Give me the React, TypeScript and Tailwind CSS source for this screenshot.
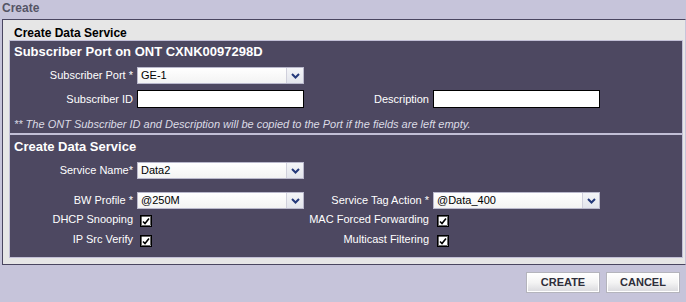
import { ReactNode } from 'react';

const Chevron = () => (
  <svg width="9" height="6" viewBox="0 0 9 6">
    <path d="M1 1 L4.5 4.5 L8 1" fill="none" stroke="#24397a" strokeWidth="2" />
  </svg>
);

const SelectBox = ({ value }: { value: string }) => (
  <div className="flex h-[17px] w-[167px] border border-[#b9b8cc] bg-gradient-to-b from-white to-[#f3f3f3]">
    <span className="flex-1 pl-[3px] text-[11px] leading-[15px] text-black">{value}</span>
    <span className="flex w-[17px] items-center justify-center border-l border-[#d0d0dc] bg-gradient-to-b from-[#f4f5f8] to-[#e3e5ec]">
      <Chevron />
    </span>
  </div>
);

const TextBox = () => <div className="h-[18px] w-[167px] border border-black bg-white" />;

const Check = () => (
  <svg width="12" height="12" viewBox="0 0 12 12">
    <rect x="0.5" y="0.5" width="11" height="11" fill="#fff" stroke="#000" />
    <rect x="1.5" y="1.5" width="9" height="9" fill="none" stroke="#000" strokeWidth="0.6" />
    <path d="M3 6.5 L5 8.5 L9 3.5" fill="none" stroke="#000" strokeWidth="1.6" />
  </svg>
);

const Label = ({ children }: { children: ReactNode }) => (
  <span className="pr-1 text-right text-[11px] text-white">{children}</span>
);

const Button = ({ children }: { children: ReactNode }) => (
  <button className="h-[21px] w-[74px] border border-[#b4b4bc] bg-gradient-to-b from-white via-[#f4f4f4] to-[#d9d9dd] text-[11px] font-bold text-[#2e2e3a] shadow-[inset_0_0_0_1px_#fff]">
    {children}
  </button>
);

export default function App() {
  return (
    <div
      className="flex h-[302px] w-[686px] flex-col bg-[#c6c4da]"
      style={{ fontFamily: '"Liberation Sans", Arial, sans-serif' }}
    >
      <div className="h-[19px] pl-[2px] text-[12px] font-bold leading-[17px] text-[#555566]">Create</div>

      {/* Outer panel */}
      <div className="ml-[2px] w-[684px] border border-r-[#c6c4da] border-[#4a4660] bg-[#e6e6e6] pb-[6px] pl-[6px]">
        <div className="h-[20px] pl-[5px] pt-[6px] text-[12px] font-bold leading-[14px] text-black">Create Data Service</div>

        {/* Dark panel */}
        <div className="w-[674px] border border-[#c2bfd6] bg-[#4d4861]">
          <div className="mt-[1px] pl-[4px] text-[13px] font-bold leading-[20px] text-white">
            Subscriber Port on ONT CXNK0097298D
          </div>

          <div className="mt-[5px] grid grid-cols-[127px_167px_129px_167px] items-center gap-y-[6px]">
            <Label>Subscriber Port *</Label>
            <SelectBox value="GE-1" />
            <span />
            <span />
            <Label>Subscriber ID</Label>
            <TextBox />
            <Label>Description</Label>
            <TextBox />
          </div>

          <div className="mt-[9px] pl-[4px] text-[11px] italic leading-[14px] text-[#dcdce6]">
            ** The ONT Subscriber ID and Description will be copied to the Port if the fields are left empty.
          </div>

          <div className="mt-[2px] h-[2px] bg-[#c2bfd6]" />

          <div className="mt-[2px] pl-[4px] text-[13px] font-bold leading-[20px] text-white">Create Data Service</div>

          <div className="mt-[5px] grid grid-cols-[127px_167px_129px_167px] items-center">
            <Label>Service Name*</Label>
            <SelectBox value="Data2" />
            <span />
            <span />
          </div>

          <div className="mt-[13px] grid grid-cols-[127px_167px_129px_167px] grid-rows-[17px_20px_20px] items-center pb-[8px]">
            <Label>BW Profile *</Label>
            <SelectBox value="@250M" />
            <Label>Service Tag Action *</Label>
            <SelectBox value="@Data_400" />

            <Label>DHCP Snooping</Label>
            <span className="flex pl-[3px] pt-[3px]"><Check /></span>
            <Label>MAC Forced Forwarding</Label>
            <span className="flex pl-[4px] pt-[3px]"><Check /></span>

            <Label>IP Src Verify</Label>
            <span className="flex pl-[3px] pt-[3px]"><Check /></span>
            <Label>Multicast Filtering</Label>
            <span className="flex pl-[4px] pt-[3px]"><Check /></span>
          </div>
        </div>
      </div>

      <div className="mt-[7px] flex justify-end gap-[6px] pr-[6px]">
        <Button>CREATE</Button>
        <Button>CANCEL</Button>
      </div>
    </div>
  );
}
